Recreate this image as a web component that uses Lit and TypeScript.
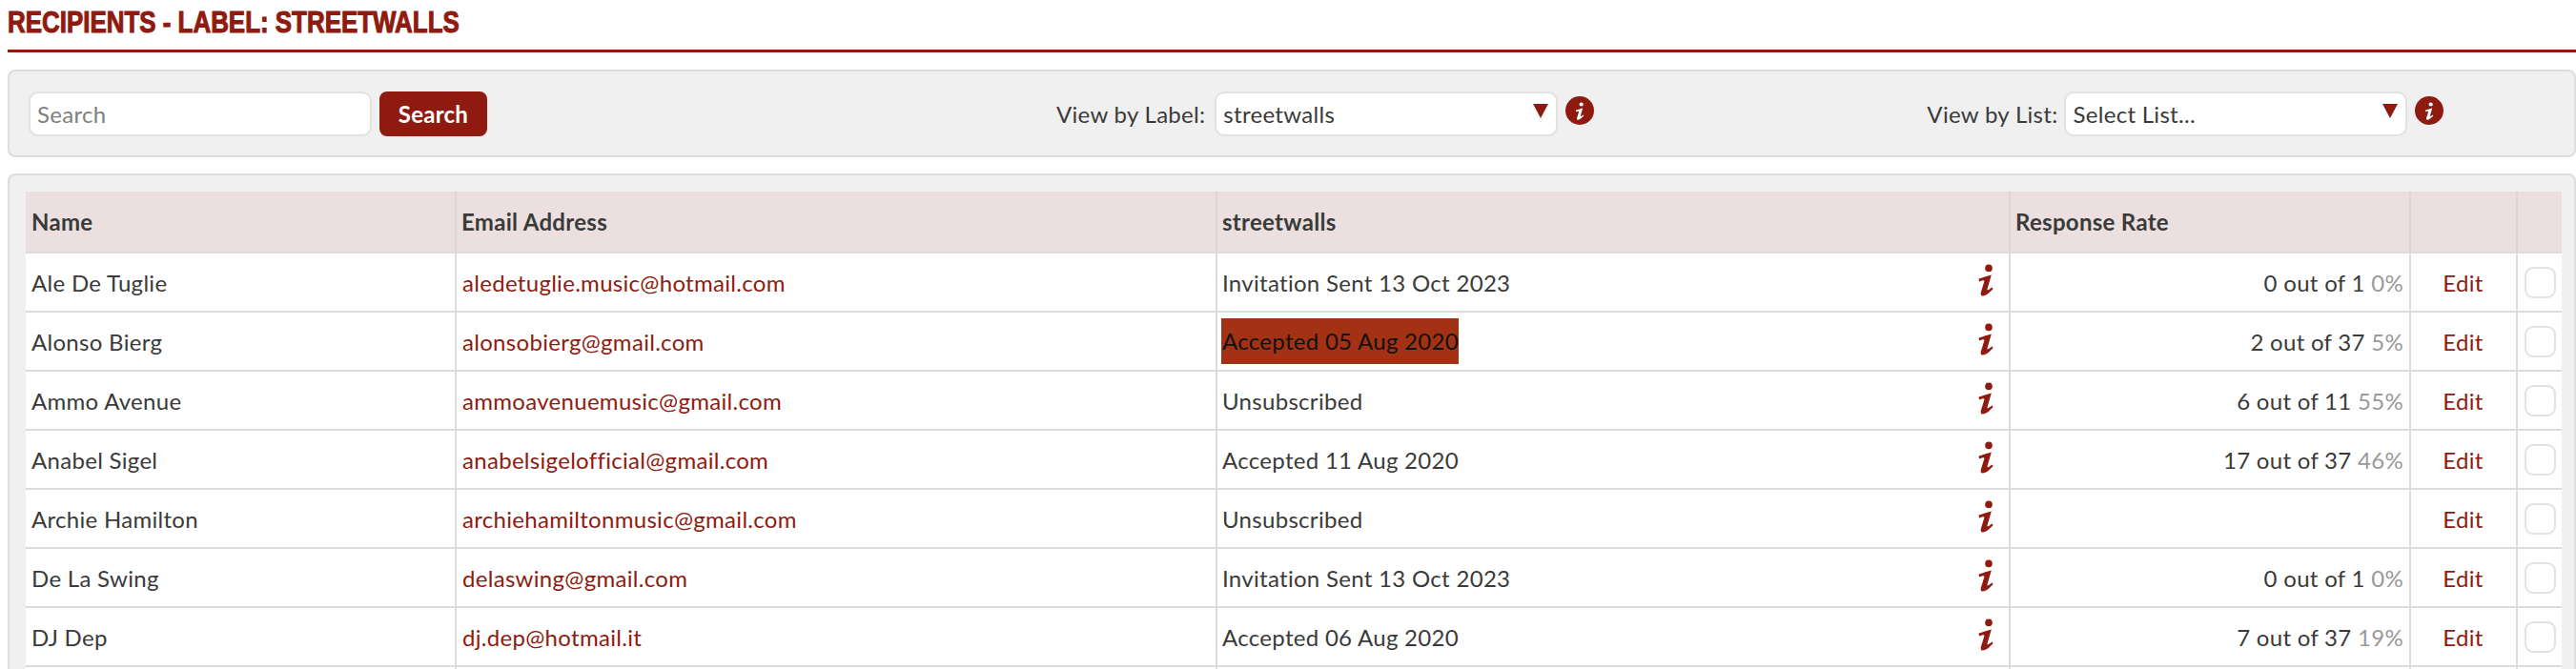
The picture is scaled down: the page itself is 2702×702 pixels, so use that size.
import { LitElement, html, css, svg } from "lit";
import { customElement } from "lit/decorators.js";

interface Row { name: string; email: string; status: string; hot?: boolean; rate?: string; pct?: string; }
const ROWS: Row[] = [
  { name: "Ale De Tuglie", email: "aledetuglie.music@hotmail.com", status: "Invitation Sent 13 Oct 2023", rate: "0 out of 1", pct: "0%" },
  { name: "Alonso Bierg", email: "alonsobierg@gmail.com", status: "Accepted 05 Aug 2020", hot: true, rate: "2 out of 37", pct: "5%" },
  { name: "Ammo Avenue", email: "ammoavenuemusic@gmail.com", status: "Unsubscribed", rate: "6 out of 11", pct: "55%" },
  { name: "Anabel Sigel", email: "anabelsigelofficial@gmail.com", status: "Accepted 11 Aug 2020", rate: "17 out of 37", pct: "46%" },
  { name: "Archie Hamilton", email: "archiehamiltonmusic@gmail.com", status: "Unsubscribed" },
  { name: "De La Swing", email: "delaswing@gmail.com", status: "Invitation Sent 13 Oct 2023", rate: "0 out of 1", pct: "0%" },
  { name: "DJ Dep", email: "dj.dep@hotmail.it", status: "Accepted 06 Aug 2020", rate: "7 out of 37", pct: "19%" },
];

const iGlyph = svg`<circle cx="12" cy="4.4" r="3.8"/><path d="M1.5 15.6 C5 14.8 10 12.6 14.8 11.6 L10.6 26 C10.2 27.5 11 27.7 12 26.9 L15.4 24.4 L16.6 25.9 C13 30 9.5 33 6 33.5 C3.8 33.8 3.2 32 3.9 29.5 L7.3 18.6 C7.6 17.3 6.5 17 5 17.5 L2 18.4 Z"/>`;

@customElement("app-root")
export class AppRoot extends LitElement {
  static styles = css`
    :host {
      display: block;
      height: 702px;
      overflow: hidden;
      background: #fff;
      font-family: "Lato", "Open Sans", sans-serif;
      font-size: 24px;
      letter-spacing: 0.3px;
      color: #3a3a3a;
    }
    .title {
      margin: 0 0 0 8px;
      height: 55px;
      border-bottom: 3px solid #8f1b10;
      box-sizing: border-box;
      font-family: "Liberation Sans", sans-serif;
      font-weight: 700;
      font-size: 32px;
      line-height: 46px;
      letter-spacing: 0;
      color: #8f1b10;
      text-transform: uppercase;
      white-space: nowrap;
      -webkit-text-stroke: 1.1px #8f1b10;
    }
    .title span {
      display: inline-block;
      transform: scaleX(0.81);
      transform-origin: left center;
    }
    .panel {
      margin-left: 8px;
      box-sizing: border-box;
      background: #f0f0f0;
      border: 2px solid #dddddd;
      border-radius: 8px;
    }
    .filters {
      margin-top: 18px;
      height: 92px;
      display: flex;
      align-items: center;
      padding-left: 20px;
    }
    .group { display: flex; align-items: center; }
    .group.mid { margin-left: 597px; }
    .group.mid .lbl { margin-right: 10px; }
    .group.end { margin-left: 349px; }
    .field {
      box-sizing: border-box;
      height: 47px;
      width: 360px;
      background: #fff;
      border: 2px solid #e2e2e2;
      border-radius: 10px;
      display: flex;
      align-items: center;
      justify-content: space-between;
      padding: 0 8px 0 7px;
    }
    .placeholder { color: #808080; }
    .btn {
      box-sizing: border-box;
      margin-left: 8px;
      width: 113px;
      height: 47px;
      border: 0;
      border-radius: 8px;
      background: #8f1b10;
      color: #fff;
      font: 700 24px "Lato", sans-serif;
      letter-spacing: 0.25px;
    }
    .lbl { margin-right: 7px; white-space: nowrap; }
    .arrow { width: 16px; height: 15px; display: block; fill: #8f1b10; margin-top: -6px; }
    .info {
      display: flex;
      align-items: center;
      justify-content: center;
      width: 30px;
      height: 30px;
      margin: -6px 0 0 8px;
      border-radius: 50%;
      background: #8f1b10;
    }
    .info svg { width: 10px; height: 19px; fill: #fff; display: block; }
    .list {
      margin-top: 17px;
      height: 560px;
      padding: 17px 0 0 17px;
    }
    table {
      border-collapse: collapse;
      table-layout: fixed;
      width: 2660px;
      background: #fff;
    }
    th, td {
      box-sizing: border-box;
      height: 62px;
      padding: 0 6px 0 5px;
      border-left: 2px solid #dcdcdc;
      border-bottom: 2px solid #dcdcdc;
      white-space: nowrap;
      text-align: left;
      font-weight: 400;
    }
    th:first-child, td:first-child { border-left: 0; padding-left: 6px; }
    td:nth-child(2) { padding-left: 6px; }
    th {
      height: 64px;
      background: #ebdfdf;
      font-weight: 700;
      border-color: #dfd5d5;
      border-bottom-color: #dcdcdc;
    }
    a { color: #8f1b10; text-decoration: none; }
    .status-cell { position: relative; }
    .hot {
      display: inline-block;
      background: #a33214;
      color: #111;
      line-height: 48px;
      margin-left: -1px;
      padding-left: 1px;
    }
    .mark {
      position: absolute;
      right: 15px;
      top: 11px;
      width: 18px;
      height: 34px;
      fill: #8f1b10;
    }
    .rate { text-align: right; }
    .pct { color: #999999; }
    .edit { text-align: center; }
    .check-cell { padding: 0; }
    .check {
      box-sizing: border-box;
      display: block;
      margin: 0 auto;
      width: 33px;
      height: 33px;
      background: #fff;
      border: 2px solid #e2e2e2;
      border-radius: 9px;
    }
    .c1 { width: 451px; } .c2 { width: 798px; } .c3 { width: 832px; }
    .c4 { width: 420px; } .c5 { width: 112px; } .c6 { width: 47px; }
  `;

  private renderSelect(text: string) {
    return html`<div class="field"><span>${text}</span>
      <svg class="arrow" viewBox="0 0 16 15"><path d="M0 0H16L8 15Z"/></svg></div>
      <span class="info"><svg viewBox="0 0 18 34">${iGlyph}</svg></span>`;
  }

  render() {
    return html`
      <h1 class="title"><span>Recipients - Label: streetwalls</span></h1>
      <div class="panel filters">
        <div class="group">
          <div class="field"><span class="placeholder">Search</span></div>
          <button class="btn">Search</button>
        </div>
        <div class="group mid"><span class="lbl">View by Label:</span>${this.renderSelect("streetwalls")}</div>
        <div class="group end"><span class="lbl">View by List:</span>${this.renderSelect("Select List...")}</div>
      </div>
      <div class="panel list">
        <table>
          <colgroup>
            <col class="c1" /><col class="c2" /><col class="c3" /><col class="c4" /><col class="c5" /><col class="c6" />
          </colgroup>
          <thead>
            <tr><th>Name</th><th>Email Address</th><th>streetwalls</th><th>Response Rate</th><th></th><th></th></tr>
          </thead>
          <tbody>
            ${ROWS.map((r) => html`
              <tr>
                <td>${r.name}</td>
                <td><a href="#">${r.email}</a></td>
                <td class="status-cell">
                  ${r.hot ? html`<span class="hot">${r.status}</span>` : r.status}
                  <svg class="mark" viewBox="0 0 18 34">${iGlyph}</svg>
                </td>
                <td class="rate">${r.rate ? html`${r.rate} <span class="pct">${r.pct}</span>` : ""}</td>
                <td class="edit"><a href="#">Edit</a></td>
                <td class="check-cell"><span class="check"></span></td>
              </tr>`)}
            <tr><td></td><td></td><td></td><td></td><td></td><td></td></tr>
          </tbody>
        </table>
      </div>
    `;
  }
}
